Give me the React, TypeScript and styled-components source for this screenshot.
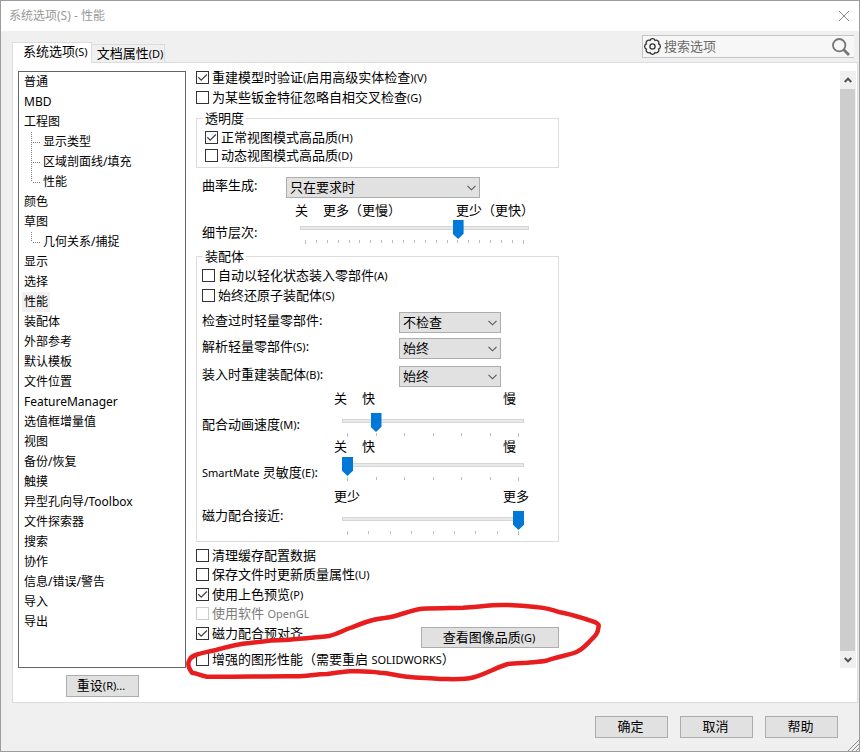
import React, { useId } from "react";
import styled, { createGlobalStyle, css } from "styled-components";

const GlobalStyle = createGlobalStyle`
  *, *::before, *::after { box-sizing: border-box; }
  body {
    margin: 0;
    background: #f0f0f0;
    color: #000;
    font: 13px/16px "Noto Sans", "Noto Sans CJK SC", sans-serif;
  }
  button, input, select { font: inherit; color: inherit; }
`;

const Dialog = styled.main`
  min-height: 100vh;
  display: flex;
  flex-direction: column;
  border: 1px solid #9b9ba1;
  background: #f0f0f0;
`;

const TitleBar = styled.header`
  display: flex;
  align-items: center;
  justify-content: space-between;
  height: 30px;
  padding: 0 8px;
  background: #fff;
`;

const Title = styled.h1`
  margin: 0;
  font-size: 12px;
  font-weight: 400;
  color: #999;
`;

const CloseButton = styled.button`
  display: grid;
  place-items: center;
  width: 14px;
  height: 14px;
  padding: 0;
  border: 0;
  background: none;
`;

const TopStrip = styled.div`
  display: flex;
  justify-content: space-between;
  align-items: flex-start;
  height: 31px;
  padding: 4px 5px 0 11px;
`;

const Tabs = styled.div`
  display: flex;
  align-self: flex-end;
  align-items: flex-end;
`;

const Tab = styled.button<{ $active?: boolean }>`
  height: 18px;
  padding: 0 1px 0 5px;
  border: 1px solid #dcdcdc;
  border-width: 1px 1px 0 0;
  background: #f0f0f0;
  line-height: 16px;
  white-space: nowrap;
  ${(p) =>
    p.$active &&
    css`
      height: 21px;
      margin-bottom: -1px;
      padding: 0 3px 4px 10px;
      border-width: 1px 1px 0 1px;
      background: #fff;
      z-index: 1;
    `}
`;

const SearchBox = styled.label`
  display: flex;
  align-items: center;
  width: 212px;
  height: 23px;
  padding: 0 4px 0 1px;
  border: 1px solid #c4c4c4;
  border-right: 0;
  background: #f7f7f7;
`;

const SearchInput = styled.input`
  flex: 1;
  min-width: 0;
  height: 18px;
  margin-left: 3px;
  padding: 0 0 2px;
  border: 0;
  outline: 0;
  background: none;
  &::placeholder { color: #6a6a6a; }
`;

const Panel = styled.section`
  flex: 1;
  display: grid;
  grid-template-columns: 168px 1fr 16px;
  grid-template-rows: 1fr auto;
  column-gap: 10px;
  row-gap: 7px;
  margin: 0 1px 0 11px;
  padding: 8px 1px 5px 5px;
  border: 1px solid #dcdcdc;
  background: #fff;
`;

const Tree = styled.ul`
  margin: 0;
  padding: 0 0 0 3px;
  list-style: none;
  border: 1px solid #646464;
  font-size: 12px;
`;

const TreeRow = styled.li`
  display: flex;
  height: 20px;
`;

const TreeButton = styled.button<{ $selected?: boolean }>`
  padding: 0 2px;
  border: 0;
  background: ${(p) => (p.$selected ? "#f0f0f0" : "none")};
  line-height: 20px;
  white-space: nowrap;
`;

const Branch = styled.svg`
  flex: none;
  margin-left: 9px;
`;

const Button = styled.button<{ $wide?: boolean }>`
  width: ${(p) => (p.$wide ? 138 : 73)}px;
  height: ${(p) => (p.$wide ? 21 : 22)}px;
  padding: 0 2px 2px 0;
  border: 1px solid #adadad;
  background: #e1e1e1;
  line-height: 18px;
  white-space: nowrap;
`;

const ResetButton = styled(Button)`
  grid-row: 2;
  justify-self: center;
`;

const Content = styled.div`
  max-width: 363px;
`;

const Indented = styled.div`
  padding-left: 6px;
`;

const Key = styled.small`
  font-size: 11px;
`;

const CheckLabel = styled.label<{ $gap: number; $disabled?: boolean }>`
  display: flex;
  align-items: flex-start;
  height: 14px;
  margin-top: ${(p) => p.$gap}px;
  line-height: 12px;
  white-space: nowrap;
  color: ${(p) => (p.$disabled ? "#7a7a7a" : "#000")};
`;

const CheckBox = styled.span`
  flex: none;
  display: grid;
  width: 13px;
  height: 13px;
  margin-right: 3px;
  & > * { grid-area: 1 / 1; }
  svg { visibility: hidden; pointer-events: none; }
  input:checked + svg { visibility: visible; }
`;

const CheckInput = styled.input`
  appearance: none;
  width: 13px;
  height: 13px;
  margin: 0;
  border: 1px solid #333;
  background: #fff;
  &:disabled { border-color: #ccc; }
`;

const Group = styled.fieldset<{ $top: number; $bottom: number; $indent: number }>`
  min-width: 0;
  margin: ${(p) => p.$top}px 0 0;
  padding: 0 5px ${(p) => p.$bottom}px ${(p) => p.$indent}px;
  border: 1px solid #dcdcdc;
`;

const Legend = styled.legend<{ $inset: number }>`
  height: 14px;
  margin-left: ${(p) => p.$inset}px;
  padding: 0 2px;
  line-height: 14px;
`;

const Field = styled.div<{ $gap: number }>`
  display: flex;
  align-items: flex-start;
  margin-top: ${(p) => p.$gap}px;
`;

const FieldLabel = styled.label<{ $width: number }>`
  flex: none;
  width: ${(p) => p.$width}px;
  line-height: 17px;
  white-space: nowrap;
`;

const SelectBox = styled.span<{ $width: number }>`
  display: grid;
  align-items: center;
  width: ${(p) => p.$width}px;
  & > * { grid-area: 1 / 1; }
  svg { justify-self: end; margin-right: 4px; pointer-events: none; }
`;

const SelectInput = styled.select`
  appearance: none;
  width: 100%;
  height: 21px;
  padding: 0 3px 2px;
  border: 1px solid #adadad;
  border-radius: 0;
  background: #e1e1e1;
  line-height: 18px;
`;

const SliderLabel = styled(FieldLabel)<{ $lift: number }>`
  align-self: flex-end;
  line-height: 16px;
  margin-bottom: ${(p) => p.$lift}px;
`;

const SliderColumn = styled.div<{ $width: number }>`
  width: ${(p) => p.$width}px;
`;

const Scale = styled.div`
  display: flex;
  gap: 15px;
  height: 16px;
  line-height: 15px;
  white-space: nowrap;
`;

const ScaleEnd = styled.span`
  min-width: 26px;
  margin-left: auto;
`;

const SliderBody = styled.div<{ $gap: number; $start: number }>`
  margin: ${(p) => p.$gap}px 5px 0 ${(p) => p.$start}px;
`;

const Range = styled.input`
  appearance: none;
  display: block;
  width: 100%;
  height: 16px;
  margin: 0;
  background: none;
  &::-webkit-slider-runnable-track {
    height: 4px;
    background: #e7eaea;
    box-shadow: inset 0 0 0 1px #d6d6d6;
  }
  &::-webkit-slider-thumb {
    appearance: none;
    width: 11px;
    height: 19px;
    margin-top: -6px;
    background: #0078d7;
    clip-path: polygon(0 0, 100% 0, 100% 72%, 50% 100%, 0 72%);
  }
`;

const Ticks = styled.div`
  display: flex;
  justify-content: space-between;
  height: 4px;
  margin-top: 4px;
  padding: 0 5px;
`;

const Tick = styled.i`
  width: 1px;
  height: 3px;
  background: #bdbdbd;
  &:first-child, &:last-child { height: 4px; }
`;

const GraphicsRows = styled.div`
  position: relative;
  margin-top: 6px;
`;

const ButtonRow = styled.div`
  display: flex;
  align-items: flex-start;
  justify-content: space-between;
`;

const Marker = styled.svg`
  position: absolute;
  left: -12px;
  top: -27px;
  pointer-events: none;
`;

const ScrollBar = styled.div`
  display: grid;
  grid-template-rows: 18px 1fr 17px;
  background: #f0f0f0;
`;

const ScrollButton = styled.button`
  display: grid;
  place-items: center;
  padding: 0 1px 0 0;
  border: 0;
  background: #f0f0f0;
`;

const ScrollThumb = styled.div`
  margin-right: 1px;
  background: #cdcdcd;
`;

const Footer = styled.footer`
  position: relative;
  display: flex;
  justify-content: flex-end;
  gap: 12px;
  padding: 13px 21px;
`;

const Grip = styled.svg`
  position: absolute;
  right: 0;
  bottom: 0;
`;

type CheckProps = {
  text: React.ReactNode;
  hotkey?: string;
  gap?: number;
  checked?: boolean;
  disabled?: boolean;
};

function Check({ text, hotkey, gap = 0, checked, disabled }: CheckProps) {
  return (
    <CheckLabel $gap={gap} $disabled={disabled}>
      <CheckBox>
        <CheckInput type="checkbox" defaultChecked={checked} disabled={disabled} />
        <svg width="13" height="13" viewBox="0 0 13 13" fill="none">
          <path d="M2.300 6.300 5.200 9.200 10.900 3.500" stroke="#444" strokeWidth="1.3" />
        </svg>
      </CheckBox>
      <span>
        {text}
        {hotkey && <Key>{hotkey}</Key>}
      </span>
    </CheckLabel>
  );
}

type SelectProps = {
  label: string;
  hotkey?: string;
  value: string;
  options: string[];
  labelWidth: number;
  width: number;
  gap: number;
};

function Select({ label, hotkey, value, options, labelWidth, width, gap }: SelectProps) {
  const id = useId();
  return (
    <Field $gap={gap}>
      <FieldLabel htmlFor={id} $width={labelWidth}>
        {label}
        {hotkey && <Key>{hotkey}</Key>}:
      </FieldLabel>
      <SelectBox $width={width}>
        <SelectInput id={id} defaultValue={value}>
          {options.map((o) => (
            <option key={o}>{o}</option>
          ))}
        </SelectInput>
        <svg width="9" height="6" viewBox="0 0 9 6" fill="none">
          <path d="M.5.8 4.5 4.8 8.5.8" stroke="#555" strokeWidth="1.1" />
        </svg>
      </SelectBox>
    </Field>
  );
}

type SliderProps = {
  label: React.ReactNode;
  scale: string[];
  end: string;
  steps: number;
  value: number;
  labelWidth: number;
  width: number;
  start: number;
  gap: number;
  bodyGap: number;
  lift: number;
};

function Slider(p: SliderProps) {
  const id = useId();
  return (
    <Field $gap={p.gap}>
      <SliderLabel htmlFor={id} $width={p.labelWidth} $lift={p.lift}>
        {p.label}
      </SliderLabel>
      <SliderColumn $width={p.width}>
        <Scale>
          {p.scale.map((s) => (
            <span key={s}>{s}</span>
          ))}
          <ScaleEnd>{p.end}</ScaleEnd>
        </Scale>
        <SliderBody $gap={p.bodyGap} $start={p.start}>
          <Range id={id} type="range" min={0} max={p.steps} defaultValue={p.value} />
          <Ticks>
            {Array.from({ length: p.steps + 1 }, (_, i) => (
              <Tick key={i} />
            ))}
          </Ticks>
        </SliderBody>
      </SliderColumn>
    </Field>
  );
}

type TreeNode = { text: string; branch?: "mid" | "last"; selected?: boolean };

const nodes: TreeNode[] = [
  { text: "普通" },
  { text: "MBD" },
  { text: "工程图" },
  { text: "显示类型", branch: "mid" },
  { text: "区域剖面线/填充", branch: "mid" },
  { text: "性能", branch: "last" },
  { text: "颜色" },
  { text: "草图" },
  { text: "几何关系/捕捉", branch: "last" },
  { text: "显示" },
  { text: "选择" },
  { text: "性能", selected: true },
  { text: "装配体" },
  { text: "外部参考" },
  { text: "默认模板" },
  { text: "文件位置" },
  { text: "FeatureManager" },
  { text: "选值框增量值" },
  { text: "视图" },
  { text: "备份/恢复" },
  { text: "触摸" },
  { text: "异型孔向导/Toolbox" },
  { text: "文件探索器" },
  { text: "搜索" },
  { text: "协作" },
  { text: "信息/错误/警告" },
  { text: "导入" },
  { text: "导出" },
];

function gearPath(cx: number, cy: number, r: number, lobes: number) {
  const pt = (k: number) => {
    const a = ((k + 0.5) * 2 * Math.PI) / lobes;
    return `${(cx + r * Math.cos(a)).toFixed(2)} ${(cy + r * Math.sin(a)).toFixed(2)}`;
  };
  let d = `M${pt(0)}`;
  for (let k = 1; k <= lobes; k++) d += `A2.7 2.7 0 0 1 ${pt(k)}`;
  return d + "Z";
}

export default function App() {
  return (
    <>
      <GlobalStyle />
      <Dialog>
        <TitleBar>
          <Title>系统选项(S) - 性能</Title>
          <CloseButton aria-label="关闭">
            <svg width="12" height="12" viewBox="0 0 12 12" fill="none">
              <path d="M1 1 11 11M11 1 1 11" stroke="#888" />
            </svg>
          </CloseButton>
        </TitleBar>

        <TopStrip>
          <Tabs role="tablist">
            <Tab role="tab" aria-selected="true" $active>
              系统选项<Key>(S)</Key>
            </Tab>
            <Tab role="tab" aria-selected="false">
              文档属性<Key>(D)</Key>
            </Tab>
          </Tabs>
          <SearchBox>
            <svg width="17" height="17" viewBox="0 0 17 17" fill="none" stroke="#333" strokeWidth="1.3">
              <path d={gearPath(8.5, 8.5, 6.6, 8)} />
              <circle cx="8.5" cy="8.5" r="2.6" />
            </svg>
            <SearchInput placeholder="搜索选项" aria-label="搜索选项" />
            <svg width="18" height="18" viewBox="0 0 18 18" fill="none" stroke="#767676">
              <circle cx="7.2" cy="7.2" r="6.2" strokeWidth="1.8" />
              <path d="M11.8 11.8 17 17" strokeWidth="2.8" />
            </svg>
          </SearchBox>
        </TopStrip>

        <Panel>
          <Tree>
            {nodes.map((n, i) => (
              <TreeRow key={i}>
                {n.branch && (
                  <Branch width="10" height="20" viewBox="0 0 10 20" stroke="#808080" strokeDasharray="1 1">
                    <path d={n.branch === "mid" ? "M.5 0V20" : "M.5 0V10"} />
                    <path d="M2 10.5H10" />
                  </Branch>
                )}
                <TreeButton $selected={n.selected}>{n.text}</TreeButton>
              </TreeRow>
            ))}
          </Tree>

          <Content>
            <Check
              text={<>重建模型时验证<Key>(</Key>启用高级实体检查<Key>)</Key></>}
              hotkey="(V)"
              checked
            />
            <Check text="为某些钣金特征忽略自相交叉检查" hotkey="(G)" gap={6} />

            <Group $top={6} $bottom={4} $indent={8}>
              <Legend $inset={-2}>透明度</Legend>
              <Check text="正常视图模式高品质" hotkey="(H)" gap={6} checked />
              <Check text="动态视图模式高品质" hotkey="(D)" gap={4} />
            </Group>

            <Indented>
              <Select
                label="曲率生成"
                value="只在要求时"
                options={["只在要求时", "始终"]}
                labelWidth={84}
                width={194}
                gap={9}
              />
              <Slider
                label="细节层次:"
                scale={["关", "更多（更慢）"]}
                end="更少（更快）"
                steps={20}
                value={14}
                labelWidth={93}
                width={239}
                start={5}
                gap={5}
                bodyGap={1}
                lift={4}
              />
            </Indented>

            <Group $top={5} $bottom={6} $indent={5}>
              <Legend $inset={1}>装配体</Legend>
              <Check text="自动以轻化状态装入零部件" hotkey="(A)" gap={6} />
              <Check text="始终还原子装配体" hotkey="(S)" gap={6} />
              <Select
                label="检查过时轻量零部件"
                value="不检查"
                options={["不检查", "指示", "始终还原"]}
                labelWidth={197}
                width={102}
                gap={9}
              />
              <Select
                label="解析轻量零部件"
                hotkey="(S)"
                value="始终"
                options={["始终", "提示"]}
                labelWidth={197}
                width={102}
                gap={5}
              />
              <Select
                label="装入时重建装配体"
                hotkey="(B)"
                value="始终"
                options={["始终", "提示", "从不"]}
                labelWidth={197}
                width={102}
                gap={7}
              />
              <Slider
                label={<>配合动画速度<Key>(M)</Key>:</>}
                scale={["关", "快"]}
                end="慢"
                steps={6}
                value={1}
                labelWidth={132}
                width={195}
                start={8}
                gap={4}
                bodyGap={6}
                lift={4}
              />
              <Slider
                label={<><Key>SmartMate</Key> 灵敏度<Key>(E)</Key>:</>}
                scale={["关", "快"]}
                end="慢"
                steps={6}
                value={0}
                labelWidth={132}
                width={195}
                start={8}
                gap={2}
                bodyGap={2}
                lift={0}
              />
              <Slider
                label="磁力配合接近:"
                scale={["更少"]}
                end="更多"
                steps={8}
                value={8}
                labelWidth={132}
                width={195}
                start={8}
                gap={8}
                bodyGap={6}
                lift={12}
              />
            </Group>

            <Check text="清理缓存配置数据" gap={7} />
            <Check text="保存文件时更新质量属性" hotkey="(U)" gap={5} />
            <Check text="使用上色预览" hotkey="(P)" gap={6} checked />
            <Check text="使用软件 " hotkey="OpenGL" gap={5} disabled />
            <GraphicsRows>
              <ButtonRow>
                <Check text="磁力配合预对齐" checked />
                <Button $wide>
                  查看图像品质<Key>(G)</Key>
                </Button>
              </ButtonRow>
              <Check
                text={<>增强的图形性能（需要重启 <Key>SOLIDWORKS</Key>）</>}
                gap={5}
              />
              <Marker width="420" height="84" viewBox="184 600 420 84" fill="none" aria-hidden="true">
                <path
                  d="M196 655C203 652 208 652 216 650C230 646 238 644 250 643C265 641 272 640 284 640C302 638 316 638 329 636C337 634 342 631 350 628C358 625 365 622 373 620C380 618 387 618 393 616.500C403 614 412 610 422 608.700C436 608 450 608 463 607.700C477 607 489 605 503 605C516 605 527 606 538 607.300C546 608 553 610 560 612.300C570 614 579 617 587 619.500C592 621 600 623 598.500 627C598 633 596 635 591 640C586 645 583 649 577 651.700C570 655 556 657 547 660.500C541 662 533 662 527 662.700C521 663 513 663 508 664C497 667 486 674 473 677.500C464 680 451 679 440 679C429 678 418 678 407 676.700C398 676 389 673 380 672.700C370 671 359 671 350 671.300C342 672 335 673 327 674C317 674 307 676 297 676.300C267 676 237 677 207 676.700C202 676 196 673 192 672.700C190 670 187 665 189 661C190 657 193 656 198 654"
                  stroke="#e81e1e"
                  strokeWidth="4.5"
                  strokeLinecap="round"
                  strokeLinejoin="round"
                />
              </Marker>
            </GraphicsRows>
          </Content>

          <ScrollBar>
            <ScrollButton aria-label="向上滚动">
              <svg width="8" height="6" viewBox="0 0 8 6" fill="none">
                <path d="M.8 5 4 1.600 7.200 5" stroke="#505050" strokeWidth="2" />
              </svg>
            </ScrollButton>
            <ScrollThumb />
            <ScrollButton aria-label="向下滚动">
              <svg width="8" height="6" viewBox="0 0 8 6" fill="none">
                <path d="M.8 1 4 4.400 7.200 1" stroke="#505050" strokeWidth="2" />
              </svg>
            </ScrollButton>
          </ScrollBar>

          <ResetButton>
            重设<Key>(R)...</Key>
          </ResetButton>
        </Panel>

        <Footer>
          <Button>确定</Button>
          <Button>取消</Button>
          <Button>帮助</Button>
          <Grip width="12" height="12" viewBox="0 0 12 12" stroke="#8c8c8c" aria-hidden="true">
            <path d="M1 12 12 1M5 12 12 5M9 12 12 9" />
          </Grip>
        </Footer>
      </Dialog>
    </>
  );
}
